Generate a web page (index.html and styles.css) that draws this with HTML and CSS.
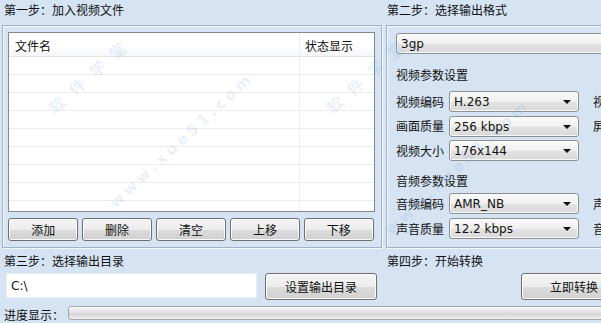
FILE: index.html
```html
<!DOCTYPE html>
<html lang="zh-CN">
<head>
<meta charset="utf-8">
<title>视频转换</title>
<link rel="stylesheet" href="styles.css">
</head>
<body>
<div class="app">
  <div class="top">
    <section class="col-left">
      <div class="step-title">第一步：加入视频文件</div>
      <div class="group group-left">
        <div class="list">
          <div class="list-head">
            <div class="cell c-name">文件名</div>
            <div class="cell c-state">状态显示</div>
          </div>
          <div class="list-body">
            <div class="row"><div class="cell c-name"></div><div class="cell c-state"></div></div>
            <div class="row"><div class="cell c-name"></div><div class="cell c-state"></div></div>
            <div class="row"><div class="cell c-name"></div><div class="cell c-state"></div></div>
            <div class="row"><div class="cell c-name"></div><div class="cell c-state"></div></div>
            <div class="row"><div class="cell c-name"></div><div class="cell c-state"></div></div>
            <div class="row"><div class="cell c-name"></div><div class="cell c-state"></div></div>
            <div class="row"><div class="cell c-name"></div><div class="cell c-state"></div></div>
            <div class="row"><div class="cell c-name"></div><div class="cell c-state"></div></div>
            <div class="row"><div class="cell c-name"></div><div class="cell c-state"></div></div>
          </div>
        </div>
        <div class="btn-row">
          <button class="btn">添加</button>
          <button class="btn">删除</button>
          <button class="btn">清空</button>
          <button class="btn">上移</button>
          <button class="btn">下移</button>
        </div>
      </div>
    </section>
    <section class="col-right">
      <div class="step-title">第二步：选择输出格式</div>
      <div class="group group-right">
        <div class="combo combo-wide"><span>3gp</span></div>
        <div class="sub-head sub-video">视频参数设置</div>
        <div class="param"><span class="lbl">视频编码</span><div class="combo"><span>H.263</span><i class="arrow"></i></div><span class="lbl2">视</span></div>
        <div class="param"><span class="lbl">画面质量</span><div class="combo"><span>256 kbps</span><i class="arrow"></i></div><span class="lbl2">屏</span></div>
        <div class="param"><span class="lbl">视频大小</span><div class="combo"><span>176x144</span><i class="arrow"></i></div><span class="lbl2"></span></div>
        <div class="sub-head sub-audio">音频参数设置</div>
        <div class="param"><span class="lbl">音频编码</span><div class="combo"><span>AMR_NB</span><i class="arrow"></i></div><span class="lbl2">声</span></div>
        <div class="param"><span class="lbl">声音质量</span><div class="combo"><span>12.2 kbps</span><i class="arrow"></i></div><span class="lbl2">音</span></div>
      </div>
    </section>
  </div>
  <div class="bottom">
    <section class="col-left">
      <div class="step-title step-low">第三步：选择输出目录</div>
      <div class="dir-row">
        <div class="textbox">C:\</div>
        <button class="btn btn-dir">设置输出目录</button>
      </div>
    </section>
    <section class="col-right">
      <div class="step-title step-low">第四步：开始转换</div>
      <div class="go-row">
        <button class="btn btn-go">立即转换</button>
      </div>
    </section>
  </div>
  <div class="progress-row">
    <span class="progress-label">进度显示：</span>
    <div class="progress"></div>
  </div>
  <div class="watermark wm1">软件学堂</div>
  <div class="watermark wm2">www.xue51.com</div>
  <div class="watermark wm3">软件学堂</div>
  <div class="watermark wm4">www.xue51.com</div>
</div>
</body>
</html>
```
FILE: styles.css
```css
* { box-sizing: border-box; }
html, body { margin: 0; padding: 0; }
body {
  width: 601px;
  height: 323px;
  overflow: hidden;
  background: #d5e3f2;
}
.app {
  position: relative;
  width: 601px;
  height: 323px;
  overflow: hidden;
  background: #d5e3f2;
  font-family: "DejaVu Sans", "Noto Sans CJK SC", sans-serif;
  font-size: 12px;
  line-height: 14px;
  color: #111;
}
.top, .bottom {
  display: grid;
  grid-template-columns: 384px 217px;
}
.step-title {
  height: 25px;
  padding: 3px 0 0 4px;
  font-family: "Noto Sans CJK SC", sans-serif;
  white-space: nowrap;
}
.col-right .step-title { padding-left: 3px; }

.group {
  border: 1px solid #9fb2c7;
  box-shadow: inset 1px 1px 0 #f2f7fc, 1px 1px 0 #f2f7fc;
  height: 223px;
}
.group-left {
  margin-left: 2px;
  width: 380px;
  padding: 6px 0 0 5px;
}
.group-right {
  margin-left: 2px;
  width: 240px;
  padding: 7px 0 0 9px;
}

/* list view */
.list {
  width: 367px;
  height: 180px;
  background: #fff;
  border: 1px solid #828790;
  overflow: hidden;
  font-family: "Noto Sans CJK SC", sans-serif;
}
.list-head {
  display: flex;
  height: 24px;
  background: linear-gradient(#ffffff, #ffffff 60%, #f4f5f7);
  border-bottom: 1px solid #e3e4e6;
}
.list-head .cell {
  padding: 6px 0 0 6px;
}
.c-name { width: 291px; border-right: 1px solid #eeeeee; }
.c-state { flex: 1; }
.list-head .c-state { padding-left: 5px; }
.row {
  display: flex;
  height: 18px;
  border-bottom: 1px solid #ececec;
}
.row .c-name { border-right: 1px solid #efefef; }

/* buttons */
.btn-row {
  display: grid;
  grid-template-columns: repeat(5, 1fr);
  column-gap: 3.5px;
  width: 366px;
  margin-top: 6px;
}
.btn {
  height: 23px;
  padding: 0;
  margin: 0;
  border: 1px solid #707070;
  border-radius: 3px;
  background: linear-gradient(#f5f5f5, #ececec 50%, #dcdcdc 52%, #d0d0d0);
  font-family: "Noto Sans CJK SC", sans-serif;
  font-size: 12px;
  line-height: 14px;
  color: #111;
  box-shadow: inset 0 0 0 1px #fcfcfc;
}

/* combos */
.combo {
  position: relative;
  height: 21px;
  border: 1px solid #8e8f8f;
  border-radius: 3px;
  background: linear-gradient(#fbfbfb, #efefef 50%, #e3e3e3 52%, #d9d9d9);
  box-shadow: inset 0 0 0 1px #fafafa;
  padding: 3px 0 0 4px;
  white-space: nowrap;
}
.combo-wide { width: 230px; }
.arrow {
  position: absolute;
  right: 7px;
  top: 8px;
  width: 0;
  height: 0;
  border-left: 4px solid transparent;
  border-right: 4px solid transparent;
  border-top: 4px solid #111;
}
.sub-head {
  font-family: "Noto Sans CJK SC", sans-serif;
  height: 14px;
}
.sub-video { margin: 14px 0 9px; }
.sub-audio { margin: 13px 0 5px; }
.param {
  display: grid;
  grid-template-columns: 53px 130px 14px 30px;
  align-items: center;
  height: 21px;
  margin-bottom: 3.7px;
}
.lbl, .lbl2 {
  font-family: "Noto Sans CJK SC", sans-serif;
  white-space: nowrap;
}
.lbl2 { grid-column: 4; }

/* bottom */
.step-low { height: 25px; padding-top: 6px; }
.dir-row {
  display: flex;
  align-items: flex-start;
  padding-left: 6px;
}
.textbox {
  width: 251px;
  height: 25px;
  background: #fff;
  border: 1px solid #e6edf5;
  padding: 5px 0 0 4px;
}
.btn-dir {
  width: 112px;
  height: 27px;
  margin-left: 8px;
}
.go-row {
  padding-left: 137px;
}
.btn-go {
  width: 100px;
  height: 27px;
  text-align: left;
  padding-left: 28px;
}

/* progress */
.progress-row {
  display: flex;
  align-items: flex-start;
  margin-top: 6px;
}
.progress-label {
  font-family: "Noto Sans CJK SC", sans-serif;
  padding: 2px 0 0 4px;
  width: 68px;
  white-space: nowrap;
}
.progress {
  flex: 1;
  height: 14px;
  margin-right: -6px;
  border: 1px solid #a5a5a5;
  border-radius: 3px;
  background: linear-gradient(#f3f3f3, #e4e4e4 40%, #d6d6d6 60%, #eeeeee);
  box-shadow: inset 0 1px 0 #ffffff;
}

/* watermark overlay */
.watermark {
  position: absolute;
  color: rgba(110, 165, 225, 0.16);
  font-family: "DejaVu Sans", "Noto Sans CJK SC", sans-serif;
  font-weight: bold;
  white-space: nowrap;
  transform-origin: left center;
  pointer-events: none;
}
.wm1, .wm3 { font-size: 16px; letter-spacing: 11px; transform: rotate(-42deg); }
.wm2, .wm4 { font-size: 15px; letter-spacing: 4px; transform: rotate(-43deg); }
.wm1 { left: 52px; top: 104px; }
.wm2 { left: 112px; top: 198px; }
.wm3 { left: 330px; top: 104px; }
.wm4 { left: 388px; top: 225px; }
```
